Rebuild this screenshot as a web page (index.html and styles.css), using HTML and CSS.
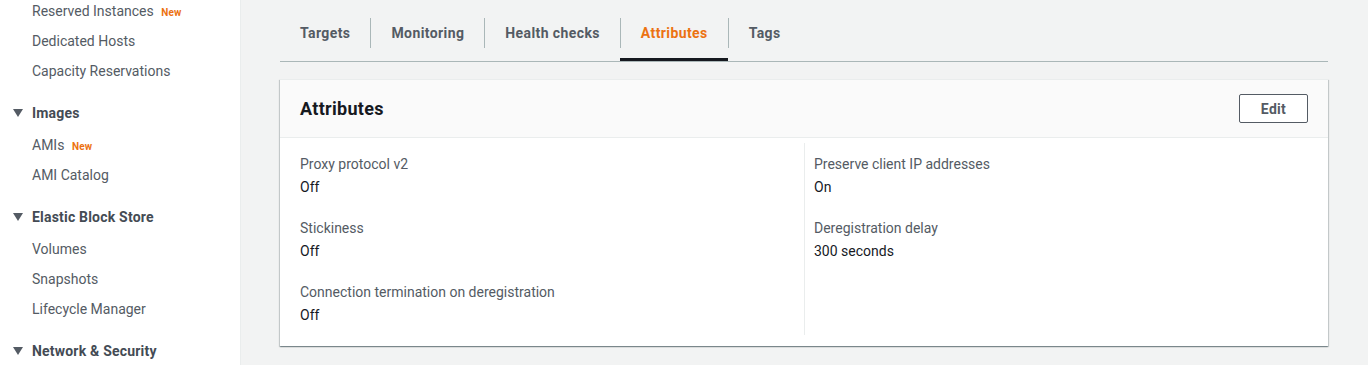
FILE: index.html
```html
<!DOCTYPE html>
<html lang="en">
<head>
  <meta charset="UTF-8" />
  <title>Target group — Attributes</title>
  <link rel="stylesheet" href="styles.css">
</head>
<body>
  <div class="layout">
    <nav class="sidebar">
      <ul class="nav-list">
        <li class="nav-item">Reserved Instances <span class="badge">New</span></li>
        <li class="nav-item">Dedicated Hosts</li>
        <li class="nav-item">Capacity Reservations</li>
      </ul>

      <div class="nav-section">
        <div class="nav-heading">
          <svg class="caret" viewBox="0 0 10 8" width="10" height="8"><polygon points="0,0 10,0 5,8" /></svg>
          Images
        </div>
        <ul class="nav-list">
          <li class="nav-item">AMIs <span class="badge">New</span></li>
          <li class="nav-item">AMI Catalog</li>
        </ul>
      </div>

      <div class="nav-section">
        <div class="nav-heading">
          <svg class="caret" viewBox="0 0 10 8" width="10" height="8"><polygon points="0,0 10,0 5,8" /></svg>
          Elastic Block Store
        </div>
        <ul class="nav-list">
          <li class="nav-item">Volumes</li>
          <li class="nav-item">Snapshots</li>
          <li class="nav-item">Lifecycle Manager</li>
        </ul>
      </div>

      <div class="nav-section">
        <div class="nav-heading">
          <svg class="caret" viewBox="0 0 10 8" width="10" height="8"><polygon points="0,0 10,0 5,8" /></svg>
          Network &amp; Security
        </div>
      </div>
    </nav>

    <main class="content">
      <ul class="tabs">
        <li class="tab"><span class="tab-label">Targets</span></li>
        <li class="tab"><span class="tab-label">Monitoring</span></li>
        <li class="tab"><span class="tab-label">Health checks</span></li>
        <li class="tab tab-active"><span class="tab-label">Attributes</span></li>
        <li class="tab"><span class="tab-label">Tags</span></li>
      </ul>

      <section class="panel">
        <header class="panel-header">
          <h2>Attributes</h2>
          <button class="btn">Edit</button>
        </header>
        <div class="panel-body">
          <div class="column">
            <div class="field">
              <div class="field-label">Proxy protocol v2</div>
              <div class="field-value">Off</div>
            </div>
            <div class="field">
              <div class="field-label">Stickiness</div>
              <div class="field-value">Off</div>
            </div>
            <div class="field">
              <div class="field-label">Connection termination on deregistration</div>
              <div class="field-value">Off</div>
            </div>
          </div>
          <div class="column column-divided">
            <div class="field">
              <div class="field-label">Preserve client IP addresses</div>
              <div class="field-value">On</div>
            </div>
            <div class="field">
              <div class="field-label">Deregistration delay</div>
              <div class="field-value">300 seconds</div>
            </div>
          </div>
        </div>
      </section>
    </main>
  </div>
</body>
</html>
```

FILE: styles.css
```css
body {
  margin: 0;
  font-family: Roboto, 'Liberation Sans', sans-serif;
  font-size: 14px;
  color: #16191f;
  background-color: #f2f3f3;
  height: 365px;
  overflow: hidden;
}

.layout {
  display: flex;
  height: 100%;
}

/* sidebar */
.sidebar {
  width: 240px;
  flex-shrink: 0;
  background: #fff;
  border-right: 1px solid #eaeded;
  overflow: hidden;
}

.sidebar > .nav-list {
  margin-top: -4px;
}

.nav-list {
  list-style: none;
  margin: 0;
  padding: 0;
}

.nav-item {
  padding-left: 32px;
  line-height: 30px;
  height: 30px;
  color: #545b64;
}

.badge {
  margin-left: 4px;
  font-size: 10px;
  line-height: 0;
  font-weight: 700;
  letter-spacing: 0.2px;
  color: #ec7211;
}

.nav-section {
  margin-top: 12px;
}

.nav-heading {
  display: flex;
  align-items: center;
  gap: 9px;
  padding-left: 13px;
  padding-bottom: 2px;
  line-height: 30px;
  font-weight: 700;
  letter-spacing: 0.2px;
  color: #444b54;
}

.caret {
  fill: #545b64;
}

/* main */
.content {
  flex: 1;
  padding: 0 40px 0 39px;
}

.tabs {
  display: flex;
  list-style: none;
  margin: 0;
  padding: 18px 0 0;
  border-bottom: 1px solid #aab7b8;
}

.tab {
  padding-bottom: 10px;
  border-bottom: 3px solid transparent;
}

.tab-label {
  display: block;
  padding: 0 20px;
  line-height: 30px;
  font-weight: 700;
  letter-spacing: 0.4px;
  color: #545b64;
}

.tab + .tab .tab-label {
  border-left: 1px solid #aab7b8;
}

.tab-active {
  border-bottom-color: #16191f;
}

.tab-active .tab-label {
  color: #ec7211;
}

.panel {
  margin-top: 17px;
  background: #fff;
  border-top: 1px solid #eaeded;
  box-shadow: 0 1px 1px 0 rgba(0, 28, 36, 0.3), 1px 1px 1px 0 rgba(0, 28, 36, 0.15), -1px 1px 1px 0 rgba(0, 28, 36, 0.15);
}

.panel-header {
  display: flex;
  align-items: center;
  justify-content: space-between;
  height: 57px;
  padding: 0 20px;
  background: #fafafa;
  border-bottom: 1px solid #eaeded;
}

.panel-header h2 {
  margin: 0;
  font-size: 18px;
  font-weight: 700;
  letter-spacing: 0.3px;
  color: #16191f;
}

.btn {
  width: 69px;
  height: 29px;
  padding: 0;
  background: #fff;
  border: 1px solid #545b64;
  border-radius: 2px;
  font-family: inherit;
  font-size: 14px;
  font-weight: 700;
  letter-spacing: 0.3px;
  color: #545b64;
  cursor: pointer;
}

.panel-body {
  display: grid;
  grid-template-columns: 1fr 1fr;
  padding: 5px 0 11px;
}

.column {
  padding: 10px 20px 9px;
}

.column-divided {
  border-left: 1px solid #eaeded;
  padding-left: 9px;
}

.field + .field {
  margin-top: 19px;
}

.field-label {
  line-height: 22px;
  color: #545b64;
}

.field-value {
  margin-top: 1px;
  line-height: 22px;
  color: #16191f;
}
```
